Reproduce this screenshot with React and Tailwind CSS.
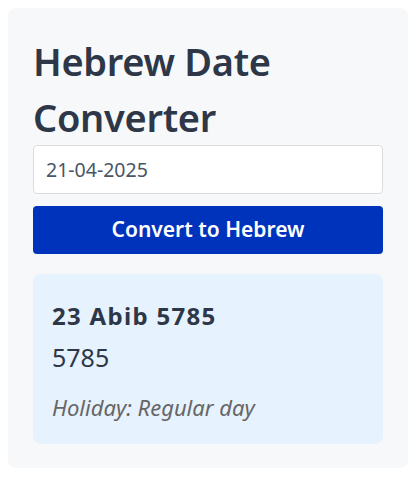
import { useState } from "react";

export default function App() {
  const [date, setDate] = useState("21-04-2025");

  return (
    <div className="min-h-[480px] bg-white p-2 font-['Noto_Sans',sans-serif]">
      <div className="w-[400px] rounded-lg bg-[#f7f8fa] px-[25px] pt-[25px] pb-6">
        <h1 className="text-[38px] font-semibold leading-[56px] tracking-[-0.3px] text-[#2d3748]">
          Hebrew Date Converter
        </h1>

        <input
          type="text"
          value={date}
          onChange={(e) => setDate(e.target.value)}
          className="block h-[49px] w-full rounded border border-[#dcdcdc] bg-white px-3 text-[19.5px] text-[#4a5568] outline-none"
        />

        <button className="mt-3 block h-12 w-full rounded bg-[#0033bb] text-[21px] font-semibold text-white">
          Convert to Hebrew
        </button>

        <div className="mt-5 rounded-lg bg-[#e6f2fd] px-[19px] pt-[26px] pb-[22px]">
          <h2 className="text-2xl font-bold leading-8 tracking-[1.3px] text-[#2d3748]">23 Abib 5785</h2>
          <p className="mt-[9px] text-[25px] leading-8 text-[#2d3748]">5785</p>
          <p className="mt-[19px] text-[22px] italic leading-[30px] text-[#666]">Holiday: Regular day</p>
        </div>
      </div>
    </div>
  );
}
